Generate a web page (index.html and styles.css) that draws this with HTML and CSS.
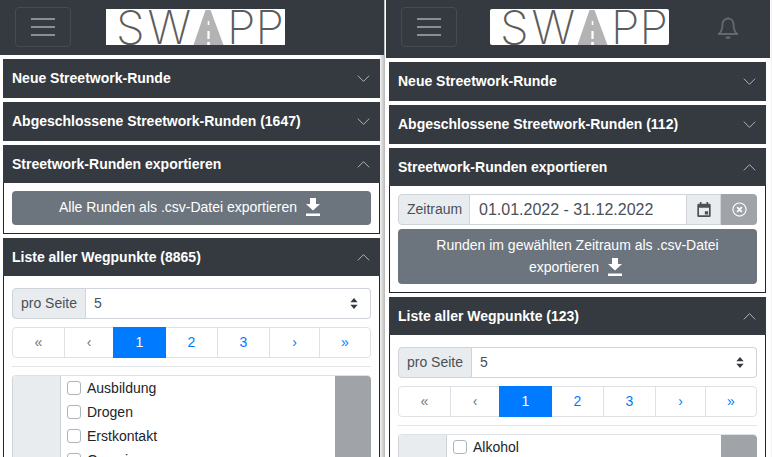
FILE: index.html
```html
<!DOCTYPE html>
<html lang="de">
<head>
<meta charset="UTF-8">
<title>SWAPP</title>
<link rel="stylesheet" href="styles.css">
</head>

<body>
<svg class="defs" width="0" height="0">
    <symbol id="chev-down" viewBox="0 0 16 16"><path d="M1 4.500 8 11.500l7-7" fill="none" stroke="currentColor" stroke-width="1.100"/></symbol>
    <symbol id="chev-up" viewBox="0 0 16 16"><path d="M1 11.500 8 4.500l7 7" fill="none" stroke="currentColor" stroke-width="1.100"/></symbol>
    <symbol id="download" viewBox="0 0 14 18"><path d="M4 0h6v6h4l-7 6.500L0 6h4zM0 15.500h14V18H0z" fill="currentColor"/></symbol>
    <symbol id="road" viewBox="0 0 31 36"><path d="M12.500 1h5L30.500 36H.5z" fill="#b3b3b3"/><path d="M14.700 12h1.600v4h-1.600zM14.400 22h2.200v8h-2.200zM14.200 33h2.600v3h-2.600z" fill="#fff"/></symbol>
</svg>

<div class="screens">
    <!-- linker screen -->
    <div class="screen screen-left">
        <nav class="navbar">
            <div class="toggler"><span></span><span></span><span></span></div>
            <div class="logo"><span class="logo-sw">SW</span><svg class="road"><use href="#road"/></svg><span>PP</span></div>
        </nav>
        <div class="cards">
            <div class="card"><div class="card-head">Neue Streetwork-Runde<svg class="chev"><use href="#chev-down"/></svg></div></div>
            <div class="card"><div class="card-head">Abgeschlossene Streetwork-Runden (1647)<svg class="chev"><use href="#chev-down"/></svg></div></div>
            <div class="card">
                <div class="card-head card-head-open">Streetwork-Runden exportieren<svg class="chev"><use href="#chev-up"/></svg></div>
                <div class="card-body card-body-dark">
                    <div class="btn-export">Alle Runden als .csv-Datei exportieren<svg class="dl"><use href="#download"/></svg></div>
                </div>
            </div>
            <div class="card">
                <div class="card-head card-head-open">Liste aller Wegpunkte (8865)<svg class="chev"><use href="#chev-up"/></svg></div>
                <div class="card-body card-body-list">
                    <div class="group">
                        <div class="addon">pro Seite</div>
                        <div class="select">5<svg class="updown" viewBox="0 0 8 12"><path d="M4 0 8 4.600H0zM4 12 0 7.400h8z"/></svg></div>
                    </div>
                    <ul class="pager">
                        <li class="off">«</li><li class="off">‹</li><li class="on">1</li><li>2</li><li>3</li><li>›</li><li>»</li>
                    </ul>
                    <hr>
                    <div class="checks">
                        <div class="checks-left"></div>
                        <div class="checks-mid">
                            <label><i></i>Ausbildung</label>
                            <label><i></i>Drogen</label>
                            <label><i></i>Erstkontakt</label>
                            <label><i></i>Gemeinwesen</label>
                        </div>
                        <div class="checks-right"></div>
                    </div>
                </div>
            </div>
        </div>
    </div>

    <!-- rechter screen -->
    <div class="screen screen-right">
        <nav class="navbar">
            <div class="toggler"><span></span><span></span><span></span></div>
            <div class="logo"><span class="logo-sw">SW</span><svg class="road"><use href="#road"/></svg><span>PP</span></div>
            <svg class="bell" viewBox="0 0 20 24"><path d="M10 2.600c-3.600 0-5.600 2.800-5.600 6.400 0 5-1.300 7-3.600 9h18.400c-2.300-2-3.600-4-3.600-9 0-3.600-2-6.400-5.600-6.400z" fill="none" stroke="currentColor" stroke-width="1.900"/><path d="M8.700 2.500a1.300 1.300 0 0 1 2.600 0zM7.500 20.500h5a2.500 2.500 0 0 1-5 0z" fill="currentColor"/></svg>
        </nav>
        <div class="cards">
            <div class="card"><div class="card-head">Neue Streetwork-Runde<svg class="chev"><use href="#chev-down"/></svg></div></div>
            <div class="card"><div class="card-head">Abgeschlossene Streetwork-Runden (112)<svg class="chev"><use href="#chev-down"/></svg></div></div>
            <div class="card">
                <div class="card-head card-head-open">Streetwork-Runden exportieren<svg class="chev"><use href="#chev-up"/></svg></div>
                <div class="card-body card-body-dark">
                    <div class="group">
                        <div class="addon addon-time">Zeitraum</div>
                        <div class="date">01.01.2022 - 31.12.2022</div>
                        <div class="addon addon-cal"><svg viewBox="0 0 16 18"><path d="M3 0h2v2h6V0h2v2h1.500A1.500 1.500 0 0 1 16 3.500v13a1.500 1.500 0 0 1-1.500 1.500h-13A1.500 1.500 0 0 1 0 16.500v-13A1.500 1.500 0 0 1 1.500 2H3zM2 7v9h12V7zM9 11h4v4H9z" fill="currentColor" fill-rule="evenodd"/></svg></div>
                        <div class="btn-clear"><svg viewBox="0 0 16 16"><circle cx="8" cy="8" r="7" fill="none" stroke="currentColor" stroke-width="1.200"/><path d="M5.500 5.500l5 5M10.500 5.500l-5 5" stroke="currentColor" stroke-width="1.800"/></svg></div>
                    </div>
                    <div class="btn-export btn-export-wide">Runden im gewählten Zeitraum als .csv-Datei exportieren<svg class="dl"><use href="#download"/></svg></div>
                </div>
            </div>
            <div class="card">
                <div class="card-head card-head-open">Liste aller Wegpunkte (123)<svg class="chev"><use href="#chev-up"/></svg></div>
                <div class="card-body card-body-list">
                    <div class="group">
                        <div class="addon">pro Seite</div>
                        <div class="select">5<svg class="updown" viewBox="0 0 8 12"><path d="M4 0 8 4.600H0zM4 12 0 7.400h8z"/></svg></div>
                    </div>
                    <ul class="pager">
                        <li class="off">«</li><li class="off">‹</li><li class="on">1</li><li>2</li><li>3</li><li>›</li><li>»</li>
                    </ul>
                    <hr>
                    <div class="checks">
                        <div class="checks-left"></div>
                        <div class="checks-mid">
                            <label><i></i>Alkohol</label>
                        </div>
                        <div class="checks-right"></div>
                    </div>
                </div>
            </div>
        </div>
    </div>
</div>
</body>
</html>
```

FILE: styles.css
```css
html,body{ margin:0; padding:0; height:100%; overflow:hidden; background:#fff;}
body{ font-family:"Liberation Sans",Arial,sans-serif; font-size:14px; color:#212529;}
.defs{ display:block;}
.screens{ display:flex; height:457px; overflow:hidden;}
.screen{ flex:none; height:457px; overflow:hidden;}
.screen-left{ width:385px; margin-right:1px; background:linear-gradient(90deg,#fff,#b8b8b8) right top/6px 100% no-repeat;}
.screen-right{ width:386px; background:linear-gradient(90deg,#fff,#f0f0f0) right top/2px 100% no-repeat;}

.navbar{ display:flex; align-items:flex-start; background:#343a40; height:55px; box-sizing:border-box; padding:7px 0 0 15px; margin-right:1px;}
.screen-right .navbar{ height:58px; margin-right:2px;}
.toggler{ width:56px; height:40px; box-sizing:border-box; border:1px solid #454b50; border-radius:4px; display:flex; flex-direction:column; justify-content:center; gap:6px; align-items:center;}
.toggler span{ display:block; width:24px; height:2px; background:#8b8f93;}
.logo{ width:179px; height:36px; box-sizing:border-box; padding-left:10px; background:#fff; margin:2px 0 0 35px; display:flex; align-items:flex-start; overflow:hidden; color:#5c5c5c; font-family:Inter,"Liberation Sans",sans-serif; font-weight:200; font-size:46px; line-height:36px;}
.logo-sw{ width:77px; flex:none; letter-spacing:3px;}
.screen-right .logo{ margin-left:33px; border-radius:2px;}
.road{ width:31px; height:36px; margin-right:3px; flex:none;}
.bell{ width:20px; height:24px; margin:9px 0 0 49px; color:#626870;}

.cards{ padding:4px 5px 0 3px; display:flex; flex-direction:column; gap:4px;}
.screen-right .cards{ padding-right:6px;}
.card-head{ height:39px; box-sizing:border-box; padding:0 9px 2px 9px; background:#343a40; color:#fff; font-weight:bold; font-size:14px; display:flex; justify-content:space-between; align-items:center;}
.card-head-open{ height:38px; padding-bottom:1px;}
.chev{ width:13px; height:13px; color:#c0c2c4; margin:2px 1px 0 0; flex:none;}
.card-body{ box-sizing:border-box; border-left:1px solid #212529; border-right:1px solid #212529;}
.card-body-dark{ border-bottom:1px solid #212529; padding:8px;}
.card-body-list{ padding:12px 8px 0 8px;}

.btn-export{ background:#6c757d; color:#fff; border-radius:4px; text-align:center; line-height:22px; padding:5px 12px 7px 12px; font-size:14px;}
.btn-export-wide{ margin-top:4px; padding-bottom:6px;}
.dl{ width:14px; height:18px; color:#fff; margin:0 4px 0 9px; vertical-align:-4px;}

.group{ display:flex; height:31px; border-radius:4px;}
.addon{ background:#e9ecef; border:1px solid #ced4da; color:#495057; box-sizing:border-box; padding:0 8px; line-height:29px; font-size:14px; border-radius:4px 0 0 4px;}
.addon-time{ width:72px; padding-right:0;}
.select{ flex:1; border:1px solid #ced4da; border-left:0; border-radius:0 4px 4px 0; line-height:29px; padding:0 8px; color:#495057; display:flex; justify-content:space-between; align-items:center;}
.updown{ width:8px; height:11px; margin-right:4px; fill:#343a40;}
.date{ flex:1; border:1px solid #ced4da; border-width:1px 0; line-height:29px; padding:0 9px; color:#495057; font-size:16px;}
.addon-cal{ border-radius:0; width:35px; padding:0; display:flex; align-items:center; justify-content:center; color:#495057;}
.addon-cal svg{ width:14px; height:15px;}
.btn-clear{ width:36px; background:#a0a4a9; border-radius:0 4px 4px 0; color:#fff; display:flex; align-items:center; justify-content:center;}
.btn-clear svg{ width:15px; height:15px;}

.pager{ list-style:none; margin:8px 0 0 0; padding:0; display:grid; grid-template-columns:51px 49px 53px 51px 52px 50px 51px; height:31px; border:1px solid #dee2e6; border-radius:4px; box-sizing:border-box;}
.pager li{ box-sizing:border-box; text-align:center; line-height:29px; color:#007bff; border-left:1px solid #dee2e6; font-size:14px;}
.pager li:first-child{ border-left:0;}
.pager .off{ color:#6c757d;}
.pager .on{ background:#007bff; color:#fff; border-left:0; margin:-1px 0; line-height:31px;}
.pager .on + li{ border-left:0;}
hr{ border:0; border-top:1px solid #e3e5e7; margin:8px 0;}

.checks{ display:flex; border-top:1px solid #dee2e6; border-left:1px solid #ced4da; border-radius:4px 4px 0 0; height:90px;}
.checks-left{ width:47px; background:#e9ecef; border-right:1px solid #ced4da; border-radius:4px 0 0 0;}
.checks-mid{ flex:1; padding:0 0 0 6px;}
.checks-mid label{ display:flex; align-items:center; height:24px; font-size:14px; color:#212529;}
.checks-mid i{ display:block; width:14px; height:14px; box-sizing:border-box; border:1px solid #adb5bd; border-radius:3px; margin-right:6px; background:#fff;}
.checks-right{ width:36px; background:#a0a4a9; border-radius:0 4px 0 0;}
```
